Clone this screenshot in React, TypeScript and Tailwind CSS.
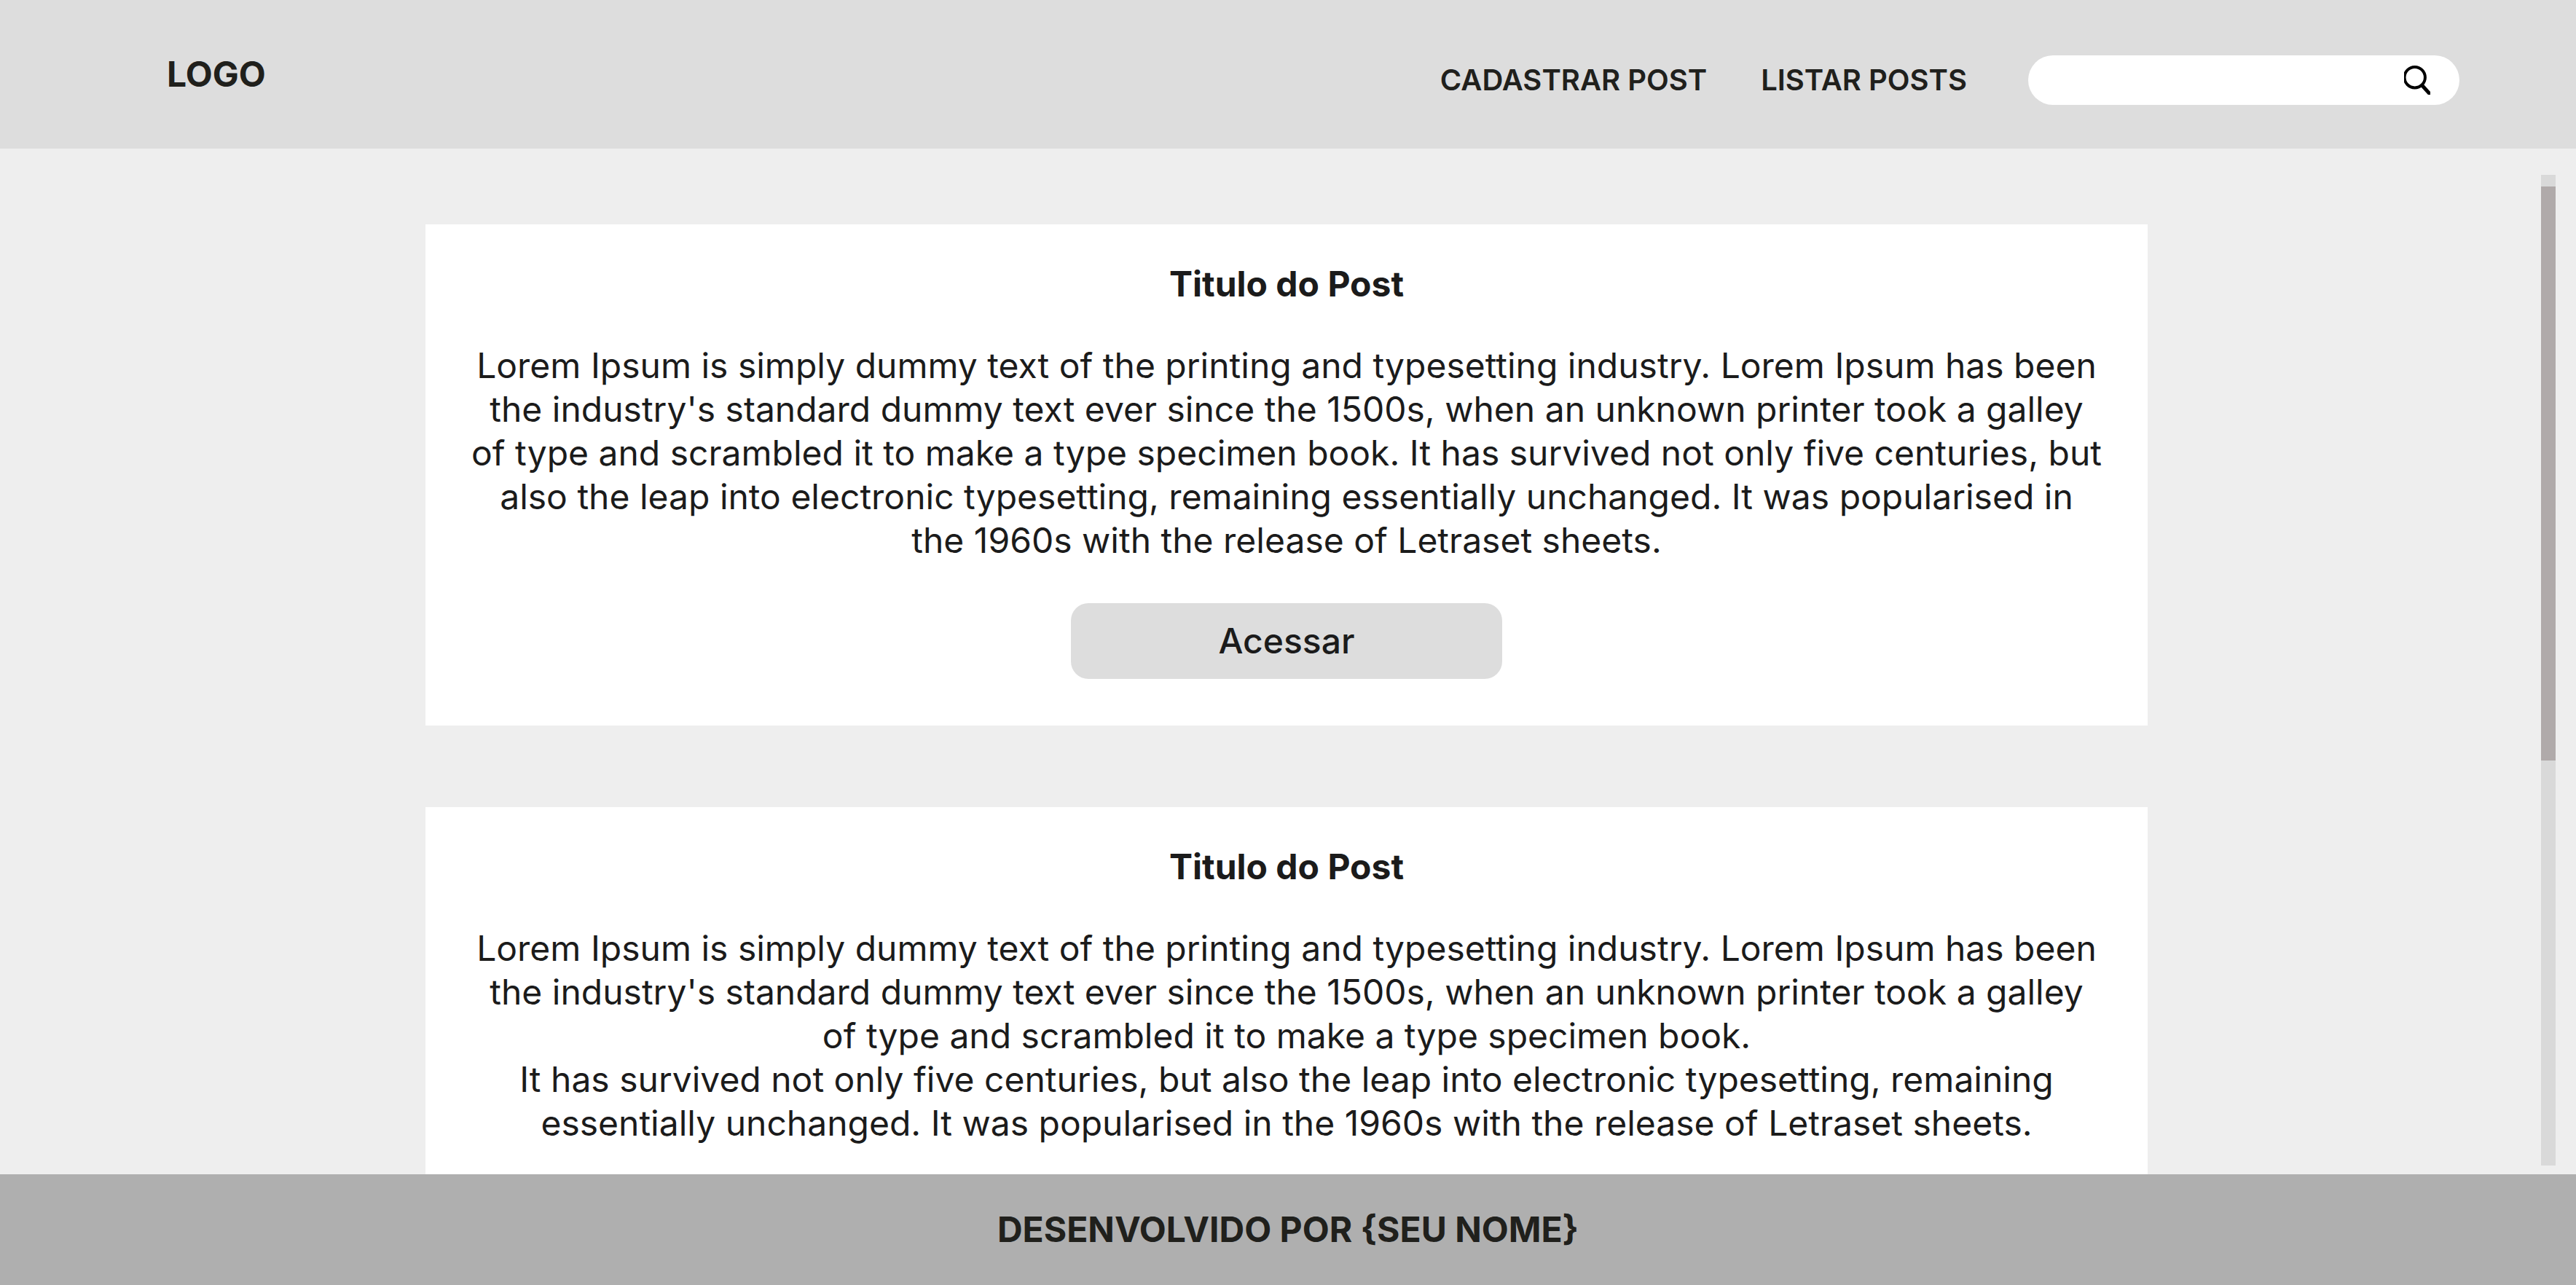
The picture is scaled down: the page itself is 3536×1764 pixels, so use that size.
import React from "react";

const intro =
  "Lorem Ipsum is simply dummy text of the printing and typesetting industry. Lorem Ipsum has been the industry's standard dummy text ever since the 1500s, when an unknown printer took a galley of type and scrambled it to make a type specimen book.";
const rest =
  "It has survived not only five centuries, but also the leap into electronic typesetting, remaining essentially unchanged. It was popularised in the 1960s with the release of Letraset sheets.";

type PostData = { title: string; paragraphs: string[]; action?: string };

const posts: PostData[] = [
  { title: "Titulo do Post", paragraphs: [`${intro} ${rest}`], action: "Acessar" },
  { title: "Titulo do Post", paragraphs: [intro, rest] },
];

function SearchIcon() {
  return (
    <svg viewBox="0 0 36 40" className="h-10 w-9" fill="none" stroke="#000000" aria-hidden="true">
      <circle cx="14.7" cy="16.2" r="14.2" strokeWidth="4" />
      <path d="M25 27.5 L39 43" strokeWidth="5" />
    </svg>
  );
}

function Header() {
  return (
    <header className="flex h-51 shrink-0 items-center bg-[#dddddd] pr-40 pl-[229px] text-[#20201c]">
      <a href="#" className="text-5xl font-bold">
        LOGO
      </a>
      <nav className="mt-4 ml-auto flex gap-[74px] text-[40px] font-semibold">
        <a href="#cadastrar">CADASTRAR POST</a>
        <a href="#listar">LISTAR POSTS</a>
      </nav>
      <form role="search" className="mt-4 ml-21 flex h-17 w-148 items-center rounded-full bg-white px-10">
        <input type="search" aria-label="Buscar" className="min-w-0 flex-1 text-4xl outline-none" />
        <button type="button" aria-label="Buscar">
          <SearchIcon />
        </button>
      </form>
    </header>
  );
}

function Post({ title, paragraphs, action }: PostData) {
  return (
    <article className="flex shrink-0 flex-col items-center bg-white px-[62px] pt-13 pb-16 text-center">
      <h2 className="text-5xl leading-15 font-bold">{title}</h2>
      <div className="mt-13 text-5xl leading-15">
        {paragraphs.map((p) => (
          <p key={p}>{p}</p>
        ))}
      </div>
      {action && (
        <button type="button" className="mt-14 h-26 w-148 rounded-3xl bg-[#dddddd] text-5xl font-medium">
          {action}
        </button>
      )}
    </article>
  );
}

export default function App() {
  return (
    <div className="flex h-screen flex-col bg-[#eeeeee] font-['Inter',sans-serif] text-[#1b1b1b]">
      <Header />
      <div className="flex min-h-0 flex-1">
        <main className="flex flex-1 flex-col gap-28 overflow-hidden pt-26 pr-135 pl-146">
          {posts.map((post, i) => (
            <Post key={i} {...post} />
          ))}
        </main>
        <div className="mt-9 mr-7 mb-3 w-5 bg-[#d9d9d9] pt-4">
          <div className="h-197 bg-[#b0aaaa]" />
        </div>
      </div>
      <footer className="flex h-38 shrink-0 items-center justify-center bg-[#afafaf] text-5xl font-bold text-[#20201c]">
        DESENVOLVIDO POR {"{SEU NOME}"}
      </footer>
    </div>
  );
}
